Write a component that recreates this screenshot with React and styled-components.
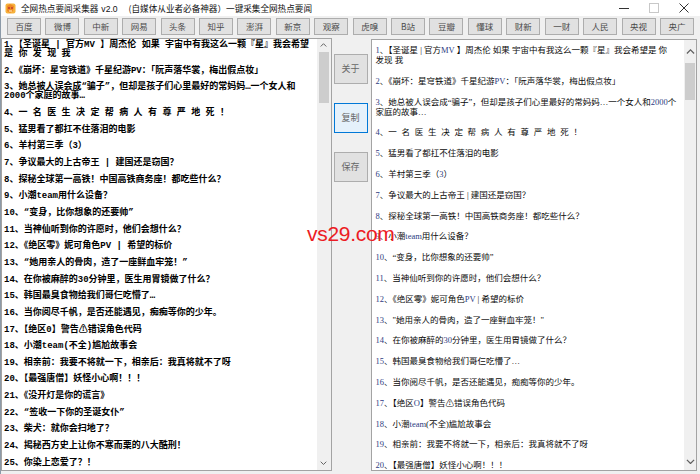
import React from "react";
import styled, { createGlobalStyle } from "styled-components";

const GlobalStyle = createGlobalStyle`
  html, body {
    margin: 0;
    padding: 0;
    background: #f0f0f0;
  }
  #root {
    width: 700px;
    height: 474px;
    overflow: hidden;
  }
`;

const Window = styled.div`
  position: relative;
  width: 700px;
  height: 474px;
  box-sizing: border-box;
  background: #f0f0f0;
  border-left: 1px solid #8c9aa8;
  font-family: "Noto Sans CJK SC", sans-serif;
  overflow: hidden;
`;

const TitleBar = styled.div`
  display: flex;
  align-items: center;
  height: 16px;
  background: #ffffff;
  padding-left: 4px;
`;

const Title = styled.div`
  flex: 1;
  margin-left: 5px;
  font-size: 8.6px;
  color: #111;
  white-space: pre;
  line-height: 16px;

  .ver {
    font-family: "Liberation Sans", sans-serif;
    margin: 0 11px 0 3px;
  }
`;

const Controls = styled.div`
  display: flex;
  align-items: center;
  height: 16px;
  margin-right: 11px;
  column-gap: 20px;
`;

const Toolbar = styled.div`
  display: flex;
  justify-content: space-between;
  height: 22px;
  box-sizing: border-box;
  padding: 2px 6px 0 6px;
`;

const SourceButton = styled.button`
  all: unset;
  box-sizing: border-box;
  width: 34px;
  height: 17px;
  background: #e1e1e1;
  border: 1px solid #adadad;
  text-align: center;
  font-family: "Noto Sans CJK SC", sans-serif;
  font-size: 8.5px;
  line-height: 15px;
  color: #4a4a4a;
`;

const Main = styled.div`
  display: flex;
  height: 436px;
  box-sizing: border-box;
  padding: 0 3px 3px 0;
`;

const ListBox = styled.div`
  display: flex;
  box-sizing: border-box;
  width: ${(p) => p.$width}px;
  margin-top: ${(p) => p.$top}px;
  background: #ffffff;
  border: 1px solid #a3a3a3;
  overflow: hidden;
`;

const LeftText = styled.div`
  flex: 1;
  padding: 2px 0 0 2px;
  font-family: "Liberation Mono", "Noto Sans CJK SC", monospace;
  font-size: 9px;
  font-weight: 700;
  color: #000;
  overflow: hidden;
`;

const LeftItem = styled.div`
  line-height: 9px;
  padding-bottom: 7.67px;
  white-space: pre-wrap;
`;

const RightText = styled.div`
  flex: 1;
  padding: 5px 7px 0 4px;
  font-family: "Liberation Serif", "Noto Sans CJK SC", serif;
  font-size: 8.5px;
  color: #0a0a0a;
  overflow: hidden;
`;

const RightItem = styled.div`
  line-height: 10px;
  padding-bottom: 10.8px;
  white-space: pre-wrap;
  word-spacing: ${(p) => (p.$spaced ? "2.6px" : "0")};
`;

const Latin = styled.span`
  color: #2e3c82;
`;

const Scrollbar = styled.div`
  display: flex;
  flex-direction: column;
  width: ${(p) => p.$width}px;
  background: #f0f0f0;
`;

const Arrow = styled.div`
  display: flex;
  align-items: center;
  justify-content: center;
  height: ${(p) => p.$h}px;
  flex: none;
`;

const Thumb = styled.div`
  flex: none;
  height: ${(p) => p.$h}px;
  margin: 0 ${(p) => p.$inset}px;
  background: #cdcdcd;
`;

const Track = styled.div`
  flex: 1;
`;

const Side = styled.div`
  display: flex;
  flex-direction: column;
  row-gap: 19px;
  width: 39px;
  box-sizing: border-box;
  padding: 16px 3px 0 2px;
`;

const SideButton = styled.button`
  all: unset;
  box-sizing: border-box;
  width: 34px;
  height: 30px;
  background: ${(p) => (p.$focused ? "#e5f1fb" : "#e1e1e1")};
  border: 1px solid ${(p) => (p.$focused ? "#0078d7" : "#adadad")};
  text-align: center;
  font-family: "Noto Sans CJK SC", sans-serif;
  font-size: 9px;
  line-height: 28px;
  color: #666;
`;

const Watermark = styled.div`
  position: absolute;
  left: 306px;
  top: 222px;
  font-family: "Liberation Sans", sans-serif;
  font-size: 21px;
  letter-spacing: -0.3px;
  color: #ec1c24;
`;

const sources = [
  "百度", "微博", "中新", "网易", "头条", "知乎", "澎湃", "新京", "观察",
  "虎嗅", "B站", "豆瓣", "懂球", "财新", "一财", "人民", "央视", "央广",
];

const leftItems = [
  "1、【圣诞星 | 官方MV 】周杰伦 如果 宇宙中有我这么一颗『星』我会希望是 你 发 现 我",
  "2、《崩坏：星穹铁道》千星纪游PV：「阮声落华裳，梅出假点妆」",
  "3、她总被人误会成“骗子”，但却是孩子们心里最好的常妈妈…一个女人和2000个家庭的故事…",
  "4、一 名 医 生 决 定 帮 病 人 有 尊 严 地 死 ！",
  "5、猛男看了都扛不住落泪的电影",
  "6、羊村第三季（3）",
  "7、争议最大的上古帝王 | 建国还是窃国？",
  "8、探秘全球第一高铁！中国高铁商务座！都吃些什么？",
  "9、小潮team用什么设备？",
  "10、“变身，比你想象的还要帅”",
  "11、当神仙听到你的许愿时，他们会想什么？",
  "12、《绝区零》妮可角色PV | 希望的标价",
  "13、“她用亲人的骨肉，造了一座鲜血牢笼！”",
  "14、在你被麻醉的30分钟里，医生用胃镜做了什么？",
  "15、韩国最臭食物给我们哥仨吃懵了…",
  "16、当你阅尽千帆，是否还能遇见，痴痴等你的少年。",
  "17、【绝区0】警告⚠错误角色代码",
  "18、小潮team(不全)尴尬故事会",
  "19、相亲前：我要不将就一下，相亲后：我真将就不了呀",
  "20、【最强唐僧】妖怪小心啊！！！",
  "21、《没开灯是你的谎言》",
  "22、“签收一下你的圣诞女仆”",
  "23、柴犬：就你会扫地了？",
  "24、揭秘西方史上让你不寒而栗的八大酷刑！",
  "25、你染上恋爱了？！",
];

const rightItems = [
  "1、【圣诞星 | 官方MV 】周杰伦 如果 宇宙中有我这么一颗『星』我会希望是 你 发现 我",
  "2、《崩坏：星穹铁道》千星纪游PV：「阮声落华裳，梅出假点妆」",
  "3、她总被人误会成“骗子”，但却是孩子们心里最好的常妈妈…一个女人和2000个家庭的故事…",
  "4、一 名 医 生 决 定 帮 病 人 有 尊 严 地 死 ！",
  "5、猛男看了都扛不住落泪的电影",
  "6、羊村第三季（3）",
  "7、争议最大的上古帝王 | 建国还是窃国？",
  "8、探秘全球第一高铁！中国高铁商务座！都吃些什么？",
  "9、小潮team用什么设备？",
  "10、“变身，比你想象的还要帅”",
  "11、当神仙听到你的许愿时，他们会想什么？",
  "12、《绝区零》妮可角色PV | 希望的标价",
  "13、\"她用亲人的骨肉，造了一座鲜血牢笼！\"",
  "14、在你被麻醉的30分钟里，医生用胃镜做了什么？",
  "15、韩国最臭食物给我们哥仨吃懵了…",
  "16、当你阅尽千帆，是否还能遇见，痴痴等你的少年。",
  "17、【绝区O】警告⚠错误角色代码",
  "18、小潮team(不全)尴尬故事会",
  "19、相亲前：我要不将就一下，相亲后：我真将就不了呀",
  "20、【最强唐僧】妖怪小心啊！！！",
];

// wrap ascii letters and digits so they get the link-ish blue
const colorLatin = (text) =>
  text.split(/([A-Za-z0-9]+)/).map((part, i) =>
    i % 2 === 1 ? <Latin key={i}>{part}</Latin> : part
  );

const Chevron = ({ up, size = 7, color = "#606060" }) => (
  <svg width={size} height={size * 0.6} viewBox="0 0 10 6">
    <path
      d={up ? "M1 5 L5 1 L9 5" : "M1 1 L5 5 L9 1"}
      fill="none"
      stroke={color}
      strokeWidth="1.4"
    />
  </svg>
);

const AppIcon = () => (
  <svg width="11" height="11" viewBox="0 0 11 11">
    <rect x="0.5" y="0.5" width="10" height="10" rx="2" fill="#f6b23c" />
    <path d="M2 3 L5 1 L9 3 L8 8 L5 10 L2 8 Z" fill="#f08a24" />
    <circle cx="4" cy="5" r="1" fill="#c0392b" />
    <circle cx="7" cy="5" r="1" fill="#c0392b" />
    <path d="M4 8 L7 8" stroke="#fff3c4" strokeWidth="1" />
  </svg>
);

const App = () => {
  return (
    <>
      <GlobalStyle />
      <Window>
        <TitleBar>
          <AppIcon />
          <Title>
            全网热点要闻采集器<span className="ver">v2.0</span>(自媒体从业者必备神器）一键采集全网热点要闻
          </Title>
          <Controls>
            <svg width="10" height="10" viewBox="0 0 10 10">
              <path d="M0 5.5 H10" stroke="#333" strokeWidth="1" />
            </svg>
            <svg width="10" height="10" viewBox="0 0 10 10">
              <rect x="0.5" y="0.5" width="9" height="9" fill="none" stroke="#c8c8c8" />
            </svg>
            <svg width="10" height="10" viewBox="0 0 10 10">
              <path d="M0.5 0.5 L9.5 9.5 M9.5 0.5 L0.5 9.5" stroke="#333" strokeWidth="1" />
            </svg>
          </Controls>
        </TitleBar>

        <Toolbar>
          {sources.map((s) => (
            <SourceButton key={s}>{s}</SourceButton>
          ))}
        </Toolbar>

        <Main>
          <ListBox $width={331} $top={0}>
            <LeftText>
              {leftItems.map((t) => (
                <LeftItem key={t}>{t}</LeftItem>
              ))}
            </LeftText>
            <Scrollbar $width={14}>
              <Arrow $h={13}>
                <Chevron up />
              </Arrow>
              <Thumb $h={51} $inset={2} />
              <Track />
              <Arrow $h={13}>
                <Chevron />
              </Arrow>
            </Scrollbar>
          </ListBox>

          <Side>
            <SideButton>关于</SideButton>
            <SideButton $focused>复制</SideButton>
            <SideButton>保存</SideButton>
          </Side>

          <ListBox $width={327} $top={1}>
            <RightText>
              {rightItems.map((t) => (
                <RightItem key={t} $spaced={t.startsWith("4、")}>
                  {colorLatin(t)}
                </RightItem>
              ))}
            </RightText>
            <Scrollbar $width={12}>
              <Arrow $h={23}>
                <Chevron up size={9} />
              </Arrow>
              <Thumb $h={37} $inset={1} />
              <Track />
              <Arrow $h={17}>
                <Chevron size={9} />
              </Arrow>
            </Scrollbar>
          </ListBox>
        </Main>

        <Watermark>vs29.com</Watermark>
      </Window>
    </>
  );
};

export default App;
